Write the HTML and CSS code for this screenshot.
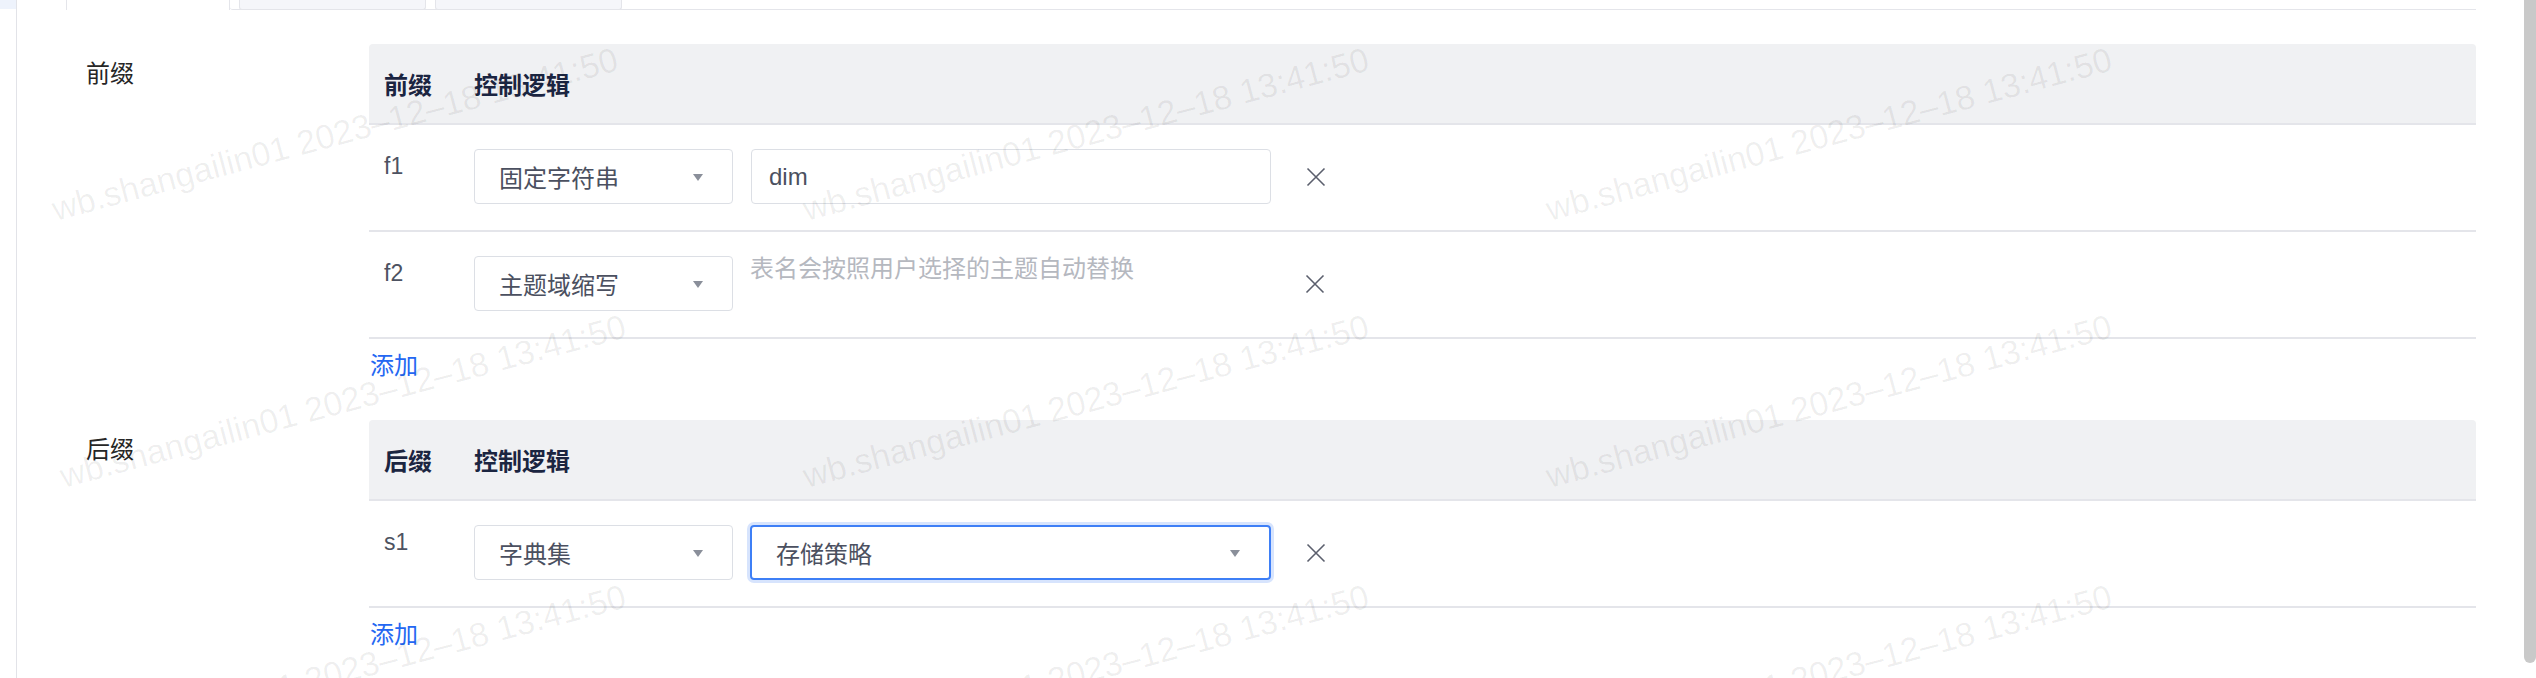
FILE: index.html
```html
<!DOCTYPE html>
<html lang="zh">
<head>
<meta charset="utf-8">
<link rel="stylesheet" href="styles.css">
</head>
<body>
<div class="app">
  <div class="side"><div class="side-top"></div></div>
  <div class="main">
    <div class="tabbar">
      <div class="tab-active"></div>
      <div class="tab-rest"><div class="tab"></div><div class="tab"></div></div>
    </div>

    <section class="section first">
      <div class="label">前缀</div>
      <div class="table">
        <div class="thead"><div class="c1">前缀</div><div class="c2">控制逻辑</div></div>
        <div class="row">
          <div class="c1 key">f1</div>
          <div class="c2 ctrl">
            <div class="select"><span>固定字符串</span><i class="arrow"></i></div>
            <div class="input">dim</div>
            <svg class="close" viewBox="0 0 20 20" width="20" height="20"><path d="M1.5 1.5 L18.5 18.5 M18.5 1.5 L1.5 18.5"/></svg>
          </div>
        </div>
        <div class="row">
          <div class="c1 key">f2</div>
          <div class="c2 ctrl">
            <div class="select"><span>主题域缩写</span><i class="arrow"></i></div>
            <div class="hint">表名会按照用户选择的主题自动替换</div>
            <svg class="close" viewBox="0 0 20 20" width="20" height="20"><path d="M1.5 1.5 L18.5 18.5 M18.5 1.5 L1.5 18.5"/></svg>
          </div>
        </div>
        <div class="add">添加</div>
      </div>
    </section>

    <section class="section second">
      <div class="label">后缀</div>
      <div class="table">
        <div class="thead"><div class="c1">后缀</div><div class="c2">控制逻辑</div></div>
        <div class="row">
          <div class="c1 key">s1</div>
          <div class="c2 ctrl">
            <div class="select"><span>字典集</span><i class="arrow"></i></div>
            <div class="select wide focus"><span>存储策略</span><i class="arrow"></i></div>
            <svg class="close" viewBox="0 0 20 20" width="20" height="20"><path d="M1.5 1.5 L18.5 18.5 M18.5 1.5 L1.5 18.5"/></svg>
          </div>
        </div>
        <div class="add">添加</div>
      </div>
    </section>
  </div>
  <div class="scroll"><div class="thumb"></div></div>

  <div class="wm">
    <span class="wm-t" style="left:56px;top:192px">wb.shangailin01 2023–12–18 13:41:50</span>
    <span class="wm-t" style="left:807px;top:192px">wb.shangailin01 2023–12–18 13:41:50</span>
    <span class="wm-t" style="left:1550px;top:192px">wb.shangailin01 2023–12–18 13:41:50</span>
    <span class="wm-t" style="left:64px;top:459px">wb.shangailin01 2023–12–18 13:41:50</span>
    <span class="wm-t" style="left:807px;top:459px">wb.shangailin01 2023–12–18 13:41:50</span>
    <span class="wm-t" style="left:1550px;top:459px">wb.shangailin01 2023–12–18 13:41:50</span>
    <span class="wm-t" style="left:64px;top:729px">wb.shangailin01 2023–12–18 13:41:50</span>
    <span class="wm-t" style="left:807px;top:729px">wb.shangailin01 2023–12–18 13:41:50</span>
    <span class="wm-t" style="left:1550px;top:729px">wb.shangailin01 2023–12–18 13:41:50</span>
  </div>
</div>
</body>
</html>
```

FILE: styles.css
```css
html, body {
  margin: 0;
  padding: 0;
  background: #ffffff;
}
body {
  width: 2536px;
  height: 678px;
  overflow: hidden;
  font-family: "Liberation Sans", "Noto Sans CJK SC", sans-serif;
  font-size: 24px;
  color: #262626;
}
.app {
  position: relative;
  display: flex;
  height: 678px;
  overflow: hidden;
}
.side {
  width: 16px;
  flex: none;
}
.side-top {
  height: 9px;
  background: #eef3fc;
}
.main {
  flex: 1;
  border-left: 1px solid #e2e3e8;
  padding-right: 48px;
  min-width: 0;
}
.scroll {
  width: 12px;
  flex: none;
}
.thumb {
  height: 663px;
  background: #c9c9c9;
  border-radius: 0 0 6px 6px;
}

/* tabs */
.tabbar {
  display: flex;
  height: 10px;
  padding-left: 49px;
}
.tab-active {
  width: 162px;
  border-left: 1px solid #e4e5ea;
  border-right: 1px solid #e4e5ea;
}
.tab-rest {
  flex: 1;
  display: flex;
  gap: 9px;
  padding-left: 9px;
  border-bottom: 1px solid #e4e5ea;
  border-bottom-left-radius: 3px;
}
.tab {
  width: 185px;
  background: #f5f6fa;
  border: 1px solid #e4e5ea;
  border-top: none;
  border-radius: 0 0 3px 3px;
  margin-bottom: -1px;
}

/* sections */
.section {
  display: grid;
  grid-template-columns: 352px 1fr;
}
.section.first {
  padding-top: 34px;
}
.section.second {
  padding-top: 37px;
}
.label {
  padding-left: 69px;
  padding-top: 13px;
  line-height: 34px;
  color: #262626;
}
.thead {
  display: flex;
  align-items: center;
  height: 79px;
  background: #f0f1f3;
  border-bottom: 2px solid #e4e5ea;
  border-radius: 4px 4px 0 0;
  font-weight: bold;
  color: #1b2541;
}
.c1 {
  width: 90px;
  padding-left: 15px;
  flex: none;
}
.row {
  display: flex;
  align-items: flex-start;
  padding: 24px 0 26px;
  border-bottom: 2px solid #e4e5ea;
}
.key {
  font-size: 23px;
  line-height: 34px;
  color: #4d5261;
}
.ctrl {
  display: flex;
  align-items: center;
}
.select {
  position: relative;
  box-sizing: border-box;
  width: 259px;
  height: 55px;
  border: 1.5px solid #dcdfe5;
  border-radius: 4px;
  padding-left: 24px;
  display: flex;
  align-items: center;
  color: #4b5060;
}
.select.wide {
  width: 521px;
  margin-left: 17px;
}
.select.focus {
  border: 2px solid #3e7ff6;
  box-shadow: 0 0 0 3px #d7e4fd;
}
.arrow {
  position: absolute;
  right: 29px;
  top: 50%;
  margin-top: -3px;
  width: 0;
  height: 0;
  border-left: 5px solid transparent;
  border-right: 5px solid transparent;
  border-top: 7px solid #8a8f9a;
}
.input {
  box-sizing: border-box;
  width: 520px;
  height: 55px;
  margin-left: 18px;
  border: 1.5px solid #dcdfe5;
  border-radius: 4px;
  padding-left: 17px;
  display: flex;
  align-items: center;
  color: #4b5060;
}
.hint {
  width: 520px;
  margin-left: 17px;
  align-self: flex-start;
  margin-top: -2px;
  line-height: 30px;
  color: #b5b8bf;
}
.close {
  margin-left: 35px;
  fill: none;
  stroke: #5b5f6d;
  stroke-width: 1.6;
}
.add {
  margin-top: 10px;
  line-height: 34px;
  color: #2467f2;
  padding-left: 1px;
}

/* watermark overlay */
.wm {
  position: absolute;
  left: 0;
  top: 0;
  width: 2536px;
  height: 678px;
  pointer-events: none;
}
.wm-t {
  position: absolute;
  white-space: nowrap;
  font-family: "Liberation Sans", sans-serif;
  font-size: 34px;
  line-height: 34px;
  color: rgba(0, 0, 0, 0.065);
  transform-origin: 0 30px;
  transform: rotate(-15deg);
}
```
